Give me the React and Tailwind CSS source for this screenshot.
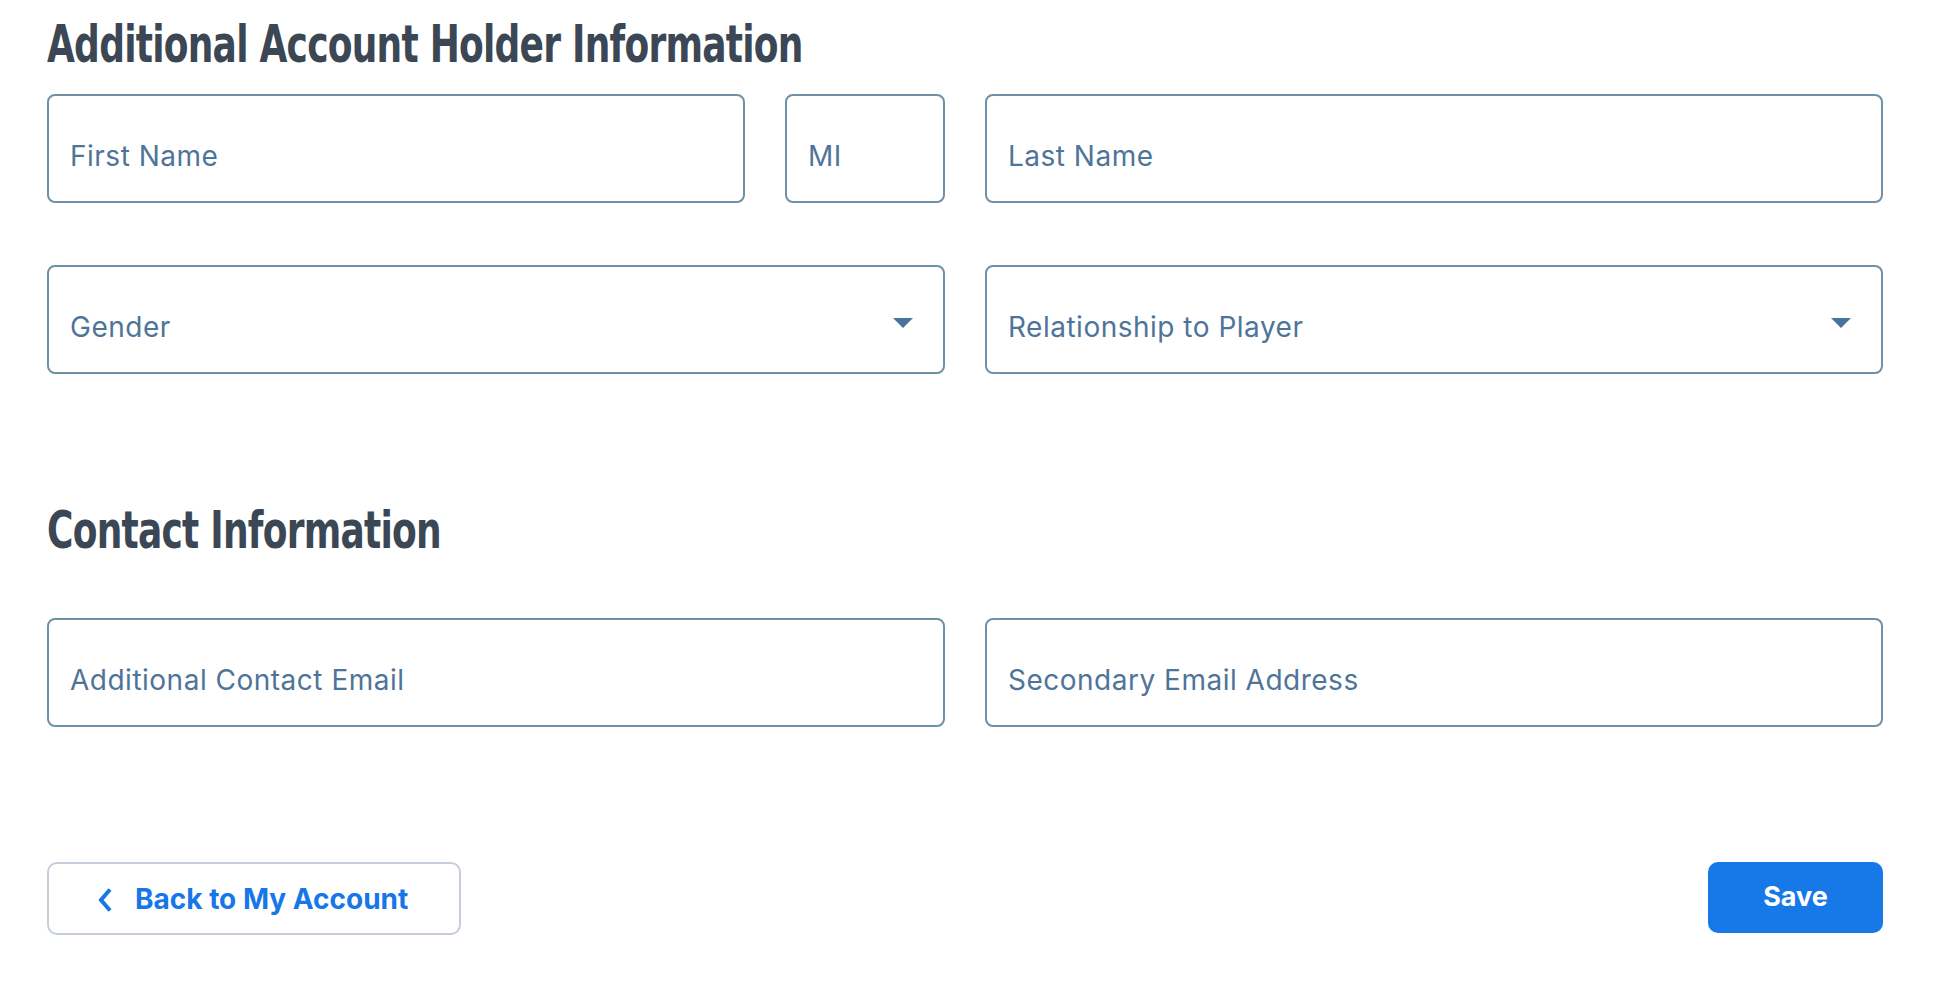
import { useState } from "react";

const headingFont = {
  fontFamily: '"DejaVu Sans Condensed", "DejaVu Sans", sans-serif',
};

function TextField({ placeholder, className = "" }) {
  const [value, setValue] = useState("");
  return (
    <input
      type="text"
      value={value}
      placeholder={placeholder}
      onChange={(e) => setValue(e.target.value)}
      className={`h-[109px] w-full rounded-[8px] border-2 border-[#7090a8] bg-white pl-[21px] pr-4 pt-[14px] text-[28px] tracking-[0.5px] text-[#3b5a78] outline-none placeholder:text-[#4f7499] ${className}`}
    />
  );
}

function SelectField({ label }) {
  return (
    <button
      type="button"
      className="flex h-[109px] w-full items-center justify-between rounded-[8px] border-2 border-[#7090a8] bg-white pl-[21px] pr-[30px] pt-[14px] text-left"
    >
      <span className="text-[28px] tracking-[0.5px] text-[#4f7499]">{label}</span>
      <svg width="20" height="10" viewBox="0 0 20 10" className="mb-[8px]">
        <path d="M0 0h20L10 10z" fill="#4a7399" />
      </svg>
    </button>
  );
}

function Heading({ children, className = "" }) {
  return (
    <h2
      className={`origin-left scale-x-[0.77] whitespace-nowrap text-[52px] font-bold leading-[64px] tracking-[-1px] text-[#3b4754] ${className}`}
      style={headingFont}
    >
      {children}
    </h2>
  );
}

export default function App() {
  return (
    <div
      className="min-h-screen bg-white pl-[47px] pr-[53px] pt-[12px]"
      style={{ fontFamily: 'Inter, Roboto, sans-serif' }}
    >
      {/* Account holder */}
      <Heading>Additional Account Holder Information</Heading>

      <div className="mt-[18px] grid grid-cols-2 gap-x-[40px] gap-y-[62px]">
        <div className="flex gap-[40px]">
          <TextField placeholder="First Name" className="flex-1" />
          <TextField placeholder="MI" className="!w-[160px] shrink-0" />
        </div>
        <TextField placeholder="Last Name" />
        <SelectField label="Gender" />
        <SelectField label="Relationship to Player" />
      </div>

      {/* Contact */}
      <Heading className="mt-[124px]">Contact Information</Heading>

      <div className="mt-[56px] grid grid-cols-2 gap-x-[40px]">
        <TextField placeholder="Additional Contact Email" />
        <TextField placeholder="Secondary Email Address" />
      </div>

      <div className="mt-[135px] flex items-start justify-between">
        <button
          type="button"
          className="flex h-[73px] w-[414px] items-center rounded-[10px] border-2 border-[#c5cfdc] bg-white pl-[48px] text-[28px] font-bold text-[#1877e8]"
        >
          <svg width="16" height="26" viewBox="0 0 16 26" className="mr-[22px] mt-[2px]">
            <path d="M13 2.5L4 13l9 10.5" fill="none" stroke="#1877e8" strokeWidth="4" />
          </svg>
          Back to My Account
        </button>
        <button
          type="button"
          className="h-[71px] w-[175px] rounded-[10px] bg-[#1778e8] text-[27px] font-bold text-white"
        >
          Save
        </button>
      </div>
    </div>
  );
}
